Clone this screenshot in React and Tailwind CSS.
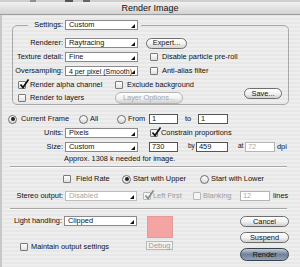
import React from "react";

const Tri = () => (
  <svg className="absolute right-[2px] bottom-[1px]" width="4" height="4" viewBox="0 0 4 4">
    <path d="M4 0 L4 4 L0 4 Z" fill="#111" />
  </svg>
);

function Select({ className = "", text, dis }) {
  return (
    <div
      className={`relative shrink-0 h-[10px] flex items-center pl-[3px] bg-white border whitespace-nowrap ${
        dis ? "border-[#bdbdbd] text-[#a4a4a4]" : "border-[#8a8a8a]"
      } ${className}`}
    >
      {text}
      <Tri />
    </div>
  );
}

function Check({ on, dis }) {
  return (
    <span
      className={`relative shrink-0 block w-[8px] h-[8px] rounded-[1px] border ${
        dis ? "border-[#b8b8b8] bg-[#f5f5f5]" : "border-[#7a7a7a] bg-linear-to-b from-white to-[#e0e0e0]"
      }`}
    >
      {on && (
        <svg className="absolute left-[0px] -top-[3px]" width="10" height="10" viewBox="0 0 10 10">
          <path d="M1.5 5.5 L4 8.5 L9.5 0.5" fill="none" stroke={dis ? "#8a8a8a" : "#111"} strokeWidth="1.7" />
        </svg>
      )}
    </span>
  );
}

function Radio({ on }) {
  return (
    <span className="shrink-0 w-[9px] h-[9px] rounded-full border border-[#6f6f6f] bg-linear-to-b from-white to-[#dadada] flex items-center justify-center">
      {on && <span className="w-[4px] h-[4px] rounded-full bg-[#222]" />}
    </span>
  );
}

function Btn({ className = "", children, dis }) {
  return (
    <div
      className={`shrink-0 rounded-full border bg-linear-to-b from-white via-[#f2f2f2] to-[#d0d0d0] flex items-center justify-center ${
        dis ? "border-[#b4b4b4] text-[#a4a4a4]" : "border-[#6e6e6e]"
      } ${className}`}
    >
      {children}
    </div>
  );
}

function Input({ className = "", v, dis }) {
  return (
    <div
      className={`shrink-0 h-[10px] bg-white border flex items-center pl-[2px] ${
        dis ? "border-[#b4b4b4] text-[#a8a8a8]" : "border-[#555]"
      } ${className}`}
    >
      {v}
    </div>
  );
}

const Sep = () => (
  <div className="shrink-0 ml-[10px] w-[277px] h-[2px] border-t border-t-[#a6a6a6] border-b border-b-[#fafafa]" />
);

export default function App() {
  return (
    <div className="w-[300px] h-[267px] overflow-hidden flex flex-col text-[7.4px] leading-none text-[#111] font-['Liberation_Sans',Arial,sans-serif] bg-[repeating-linear-gradient(180deg,#eeeeee_0px,#eeeeee_2px,#e7e7e7_2px,#e7e7e7_4px)] shadow-[inset_2px_0_0_#c8c8c8]">
      {/* top strip */}
      <div className="h-[2px] shrink-0 flex bg-[#cfcfcf]">
        <div className="w-[30px]" />
        <div className="w-[6px] bg-[#7f9a80]" />
        <div className="w-[29px]" />
        <div className="w-[8px] bg-[#555]" />
        <div className="w-[10px]" />
        <div className="w-[7px] bg-[#666]" />
      </div>
      {/* title bar */}
      <div className="h-[13px] shrink-0 flex items-center justify-center text-[9px] bg-linear-to-b from-[#f1f1f1] to-[#d3d3d3] border-b border-[#9c9c9c]">
        Render Image
      </div>

      {/* group box */}
      <fieldset className="shrink-0 ml-[12px] mt-[5px] w-[277px] border border-[#a8a8a8] rounded-[5px] p-0">
        <legend className="ml-[15px] p-0">
          <div className="flex items-center">
            <span className="w-[35px] text-right">Settings:</span>
            <Select className="ml-[2px] mr-[3px] w-[73px]" text="Custom" />
          </div>
        </legend>
        <div className="pt-[6px] flex flex-col">
          <div className="h-[14px] flex items-center">
            <span className="w-[50px] text-right">Renderer:</span>
            <Select className="ml-[2px] w-[73px]" text="Raytracing" />
            <Btn className="ml-[8px] w-[41px] h-[11px]">Expert...</Btn>
          </div>
          <div className="h-[14px] flex items-center">
            <span className="w-[50px] text-right">Texture detail:</span>
            <Select className="ml-[2px] w-[73px]" text="Fine" />
            <span className="ml-[12px]"><Check /></span>
            <span className="ml-[4px]">Disable particle pre-roll</span>
          </div>
          <div className="h-[14px] flex items-center">
            <span className="w-[50px] text-right">Oversampling:</span>
            <Select className="ml-[2px] w-[73px] text-[7px] pl-[2px]" text="4 per pixel (Smooth)" />
            <span className="ml-[12px]"><Check /></span>
            <span className="ml-[4px]">Anti-alias filter</span>
          </div>
          <div className="flex">
            <div className="flex flex-col">
              <div className="h-[13px] flex items-center pl-[5px]">
                <div className="w-[97px] flex items-center">
                  <Check on />
                  <span className="ml-[4px]">Render alpha channel</span>
                </div>
                <Check />
                <span className="ml-[4px]">Exclude background</span>
              </div>
              <div className="h-[13px] flex items-center pl-[5px]">
                <div className="w-[97px] flex items-center">
                  <Check />
                  <span className="ml-[4px]">Render to layers</span>
                </div>
                <Btn dis className="w-[68px] h-[12px]">Layer Options...</Btn>
              </div>
            </div>
            <Btn className="ml-auto mr-[6px] mt-[10px] w-[38px] h-[11px]">Save...</Btn>
          </div>
        </div>
      </fieldset>

      {/* frame row */}
      <div className="shrink-0 mt-[8px] h-[12px] flex items-center pl-[8px]">
        <div className="w-[71px] flex items-center">
          <Radio on />
          <span className="ml-[4px]">Current Frame</span>
        </div>
        <div className="w-[38px] flex items-center">
          <Radio />
          <span className="ml-[2px]">All</span>
        </div>
        <div className="w-[32px] flex items-center">
          <Radio />
          <span className="ml-[2px]">From</span>
        </div>
        <Input className="w-[29px]" v="1" />
        <span className="ml-[7px] w-[13px]">to</span>
        <Input className="w-[30px]" v="1" />
      </div>

      {/* units */}
      <div className="shrink-0 mt-[1px] h-[14px] flex items-center">
        <span className="w-[63px] text-right">Units:</span>
        <Select className="ml-[2px] w-[73px]" text="Pixels" />
        <span className="ml-[12px]"><Check on /></span>
        <span className="ml-[3px]">Constrain proportions</span>
      </div>

      {/* size */}
      <div className="shrink-0 h-[13px] flex items-center">
        <span className="w-[63px] text-right">Size:</span>
        <Select className="ml-[2px] w-[73px]" text="Custom" />
        <Input className="ml-[11px] w-[29px]" v="730" />
        <span className="ml-[10px] w-[8px] text-[6.5px]">by</span>
        <Input className="w-[32px]" v="459" />
        <span className="ml-[10px] w-[7px] text-[6.5px]">at</span>
        <Input dis className="w-[30px]" v="72" />
        <span className="ml-[2px]">dpi</span>
      </div>

      <div className="shrink-0 mt-[1px] h-[9px] flex items-center pl-[64px]">
        Approx. 1308 k needed for image.
      </div>

      <div className="mt-[3px]">
        <Sep />
      </div>

      {/* field rate */}
      <div className="shrink-0 mt-[5px] h-[12px] flex items-center pl-[63px]">
        <div className="w-[59px] flex items-center">
          <Check />
          <span className="ml-[5px]">Field Rate</span>
        </div>
        <div className="w-[78px] flex items-center">
          <Radio on />
          <span className="ml-[2px]">Start with Upper</span>
        </div>
        <Radio />
        <span className="ml-[2px]">Start with Lower</span>
      </div>

      {/* stereo */}
      <div className="shrink-0 mt-[6px] h-[10px] flex items-center">
        <span className="w-[63px] text-right">Stereo output:</span>
        <Select dis className="ml-[2px] w-[72px]" text="Disabled" />
        <div className="ml-[6px] w-[50px] flex items-center text-[#9c9c9c]">
          <Check on dis />
          <span className="ml-[2px]">Left First</span>
        </div>
        <div className="w-[47px] flex items-center text-[#9c9c9c]">
          <Check dis />
          <span className="ml-[2px]">Blanking</span>
        </div>
        <Input dis className="w-[30px]" v="12" />
        <span className="ml-[3px]">lines</span>
      </div>

      <div className="mt-[7px]">
        <Sep />
      </div>

      {/* bottom */}
      <div className="shrink-0 mt-[6px] flex items-start">
        <div className="w-[147px] flex flex-col">
          <div className="h-[10px] flex items-center">
            <span className="w-[62px] text-right">Light handling:</span>
            <Select className="ml-[2px] w-[73px]" text="Clipped" />
          </div>
          <div className="mt-[17px] h-[8px] flex items-center pl-[20px]">
            <Check />
            <span className="ml-[3px]">Maintain output settings</span>
          </div>
        </div>
        <div className="w-[26px] flex flex-col">
          <div className="h-[22px] bg-[#f5a4a4] border border-[#e59a9a]" />
          <div className="mt-[3px] -ml-[1px] w-[27px] h-[9px] border border-[#b8b8b8] bg-[#f3f3f3] text-[#9a9a9a] flex items-center justify-center">
            Debug
          </div>
        </div>
        <div className="ml-[67px] w-[49px] flex flex-col">
          <Btn className="h-[11px]">Cancel</Btn>
          <Btn className="mt-[5px] h-[11px]">Suspend</Btn>
          <div className="mt-[5px] h-[13px] rounded-full border border-[#38424f] bg-linear-to-b from-[#c3ccd7] via-[#6f8098] to-[#90a2b8] flex items-center justify-center">
            Render
          </div>
        </div>
      </div>
    </div>
  );
}
